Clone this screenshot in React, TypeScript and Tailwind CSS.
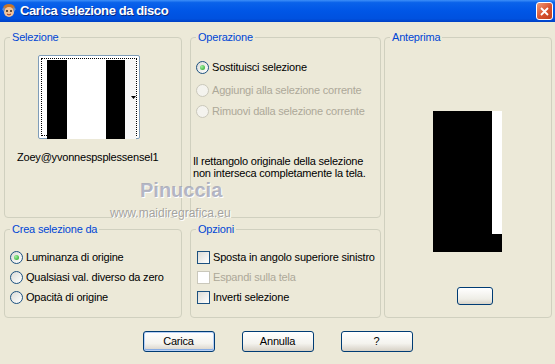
import type { ReactNode } from "react";

function Group({ title, className, children }: { title: string; className?: string; children?: ReactNode }) {
  return (
    <fieldset className={`rounded-[4px] border border-[#D0D0BF] ${className ?? ""}`}>
      <legend className="ml-[5px] px-[2px] text-[11px] leading-[13px] text-[#0046D5]">{title}</legend>
      {children}
    </fieldset>
  );
}

function Radio({ label, checked, disabled }: { label: string; checked?: boolean; disabled?: boolean }) {
  return (
    <div className="flex h-[13px] items-center">
      <span
        className={`flex h-[13px] w-[13px] items-center justify-center rounded-full border ${
          disabled
            ? "border-[#CAC8BB] bg-[#F4F3EE]"
            : "border-[#1C5180] bg-[linear-gradient(135deg,#DCDCD7,#FFFFFF)]"
        }`}
      >
        {checked && (
          <span className="h-[5px] w-[5px] rounded-full bg-[radial-gradient(circle_at_35%_35%,#A0F0A0,#21A121)]" />
        )}
      </span>
      <span className={`ml-[3px] ${disabled ? "text-[#ACA899]" : "text-black"}`}>{label}</span>
    </div>
  );
}

function Check({ label, disabled }: { label: string; disabled?: boolean }) {
  return (
    <div className="flex h-[13px] items-center">
      <span
        className={`h-[13px] w-[13px] border ${
          disabled
            ? "border-[#CAC8BB] bg-white"
            : "border-[#1C5180] bg-[linear-gradient(135deg,#DCDCD7,#FFFFFF)]"
        }`}
      />
      <span className={`ml-[3px] ${disabled ? "text-[#ACA899]" : "text-black"}`}>{label}</span>
    </div>
  );
}

function Button({ children, primary }: { children: ReactNode; primary?: boolean }) {
  return (
    <button
      type="button"
      className={`h-[21px] w-[72px] rounded-[3px] border border-[#003C74] bg-[linear-gradient(to_bottom,#FFFFFF_0%,#F4F3EE_60%,#D6D0C5_100%)] text-[11px] text-black ${
        primary ? "shadow-[inset_0_0_0_1px_#B8D0F5,inset_0_-1px_0_1px_#89ADE4]" : ""
      }`}
    >
      {children}
    </button>
  );
}

function TitleIcon() {
  return (
    <svg width="16" height="16" viewBox="0 0 16 16" aria-hidden="true">
      <path d="M2 5 Q3 1 8 1 Q13 1 14 5 L13 7 L3 7 Z" fill="#C8752A" />
      <circle cx="8" cy="9" r="5" fill="#F2C49A" />
      <circle cx="6" cy="8" r="1" fill="#3A2A1A" />
      <circle cx="10" cy="8" r="1" fill="#3A2A1A" />
      <path d="M6 11 Q8 13 10 11" stroke="#A03020" strokeWidth="1" fill="none" />
      <path d="M1 6 L4 4 L3 9 Z" fill="#5C8FD8" />
      <path d="M15 6 L12 4 L13 9 Z" fill="#5C8FD8" />
    </svg>
  );
}

export default function App() {
  return (
    <div className="relative h-[364px] w-[555px] overflow-hidden bg-[#ECE9D8] font-['Liberation_Sans',Arial,sans-serif] text-[11px] tracking-[-0.2px] text-black">
      {/* title bar */}
      <div className="flex h-[22px] items-center bg-[linear-gradient(to_bottom,#3D8FF8_0%,#0A62EA_12%,#0056E6_50%,#0051DF_85%,#0040C4_100%)] pl-[1px] pr-[2px]">
        <TitleIcon />
        <span className="ml-[3px] text-[13px] font-bold tracking-[-0.4px] text-white [text-shadow:1px_1px_0_#0A2A80]">
          Carica selezione da disco
        </span>
        <div className="ml-auto flex h-[18px] w-[17px] items-center justify-center rounded-[3px] border border-white bg-[linear-gradient(135deg,#F09A78,#D8512E_55%,#C0401E)]">
          <svg width="9" height="9" viewBox="0 0 9 9" aria-hidden="true">
            <path d="M1 1 L8 8 M8 1 L1 8" stroke="white" strokeWidth="1.8" />
          </svg>
        </div>
      </div>

      <div className="flex pl-[4px] pt-[9px]">
        <div className="grid grid-cols-[178px_191px] gap-x-[8px] gap-y-[5px]">
          <Group title="Selezione" className="h-[187px]">
            <div className="pl-[33px] pt-[11px]">
              <div className="relative h-[84px] w-[102px] rounded-[2px] border border-[#7F9DB9] bg-white p-[2px]">
                <div className="flex h-full w-full border border-dotted border-black pl-[5px] pt-[1px]">
                  <div className="h-[79px] w-[20px] bg-black" />
                  <div className="h-[79px] w-[39px] bg-white" />
                  <div className="h-[79px] w-[19px] bg-black" />
                  <div className="h-[79px] w-[11px] bg-[#F6F6F6]" />
                </div>
                <svg className="absolute right-[3px] top-[40px]" width="5" height="3" viewBox="0 0 5 3" aria-hidden="true">
                  <path d="M0 0 H5 L2.5 3 Z" fill="black" />
                </svg>
              </div>
            </div>
            <div className="mt-[12px] pl-[12px] leading-[13px]">Zoey@yvonnespsplessensel1</div>
          </Group>

          <Group title="Operazione" className="h-[187px]">
            <div className="pl-[5px] pt-[17px]">
              <Radio label="Sostituisci selezione" checked />
              <div className="mt-[10px]">
                <Radio label="Aggiungi alla selezione corrente" disabled />
              </div>
              <div className="mt-[8px]">
                <Radio label="Rimuovi dalla selezione corrente" disabled />
              </div>
            </div>
            <div className="mt-[37px] pl-[2px] leading-[12px]">
              Il rettangolo originale della selezione
              <br />
              non interseca completamente la tela.
            </div>
          </Group>

          <Group title="Crea selezione da" className="h-[95px]">
            <div className="flex flex-col gap-[7px] pl-[5px] pt-[15px]">
              <Radio label="Luminanza di origine" checked />
              <Radio label="Qualsiasi val. diverso da zero" />
              <Radio label="Opacità di origine" />
            </div>
          </Group>

          <Group title="Opzioni" className="h-[95px]">
            <div className="flex flex-col gap-[7px] pl-[6px] pt-[15px]">
              <Check label="Sposta in angolo superiore sinistro" />
              <Check label="Espandi sulla tela" disabled />
              <Check label="Inverti selezione" />
            </div>
          </Group>
        </div>

        <Group title="Anteprima" className="ml-[3px] h-[287px] w-[168px]">
          <div className="pl-[48px] pt-[67px]">
            <div className="flex">
              <div className="h-[123px] w-[59px] bg-black" />
              <div className="h-[123px] w-[10px] bg-white" />
            </div>
            <div className="h-[18px] w-[69px] bg-black" />
          </div>
          <div className="mt-[35px] pl-[72px]">
            <div className="h-[18px] w-[36px] rounded-[3px] border border-[#003C74] bg-[linear-gradient(to_bottom,#FFFFFF,#EEEDE6_70%,#D8D3C8)]" />
          </div>
        </Group>
      </div>

      <div className="mt-[13px] flex justify-center gap-[27px]">
        <Button primary>Carica</Button>
        <Button>Annulla</Button>
        <Button>?</Button>
      </div>

      {/* watermark */}
      <div className="pointer-events-none absolute left-[140px] top-[179px] text-[20px] font-bold leading-[23px] tracking-[0px] text-[#9397AE]/70 [text-shadow:1px_1px_0_#FFFFFF]">
        Pinuccia
      </div>
      <div className="pointer-events-none absolute left-[110px] top-[206px] text-[12px] leading-[14px] tracking-[0px] text-[#8E8E8E]/80 [text-shadow:1px_1px_0_#FFFFFF]">
        www.maidiregrafica.eu
      </div>
    </div>
  );
}
